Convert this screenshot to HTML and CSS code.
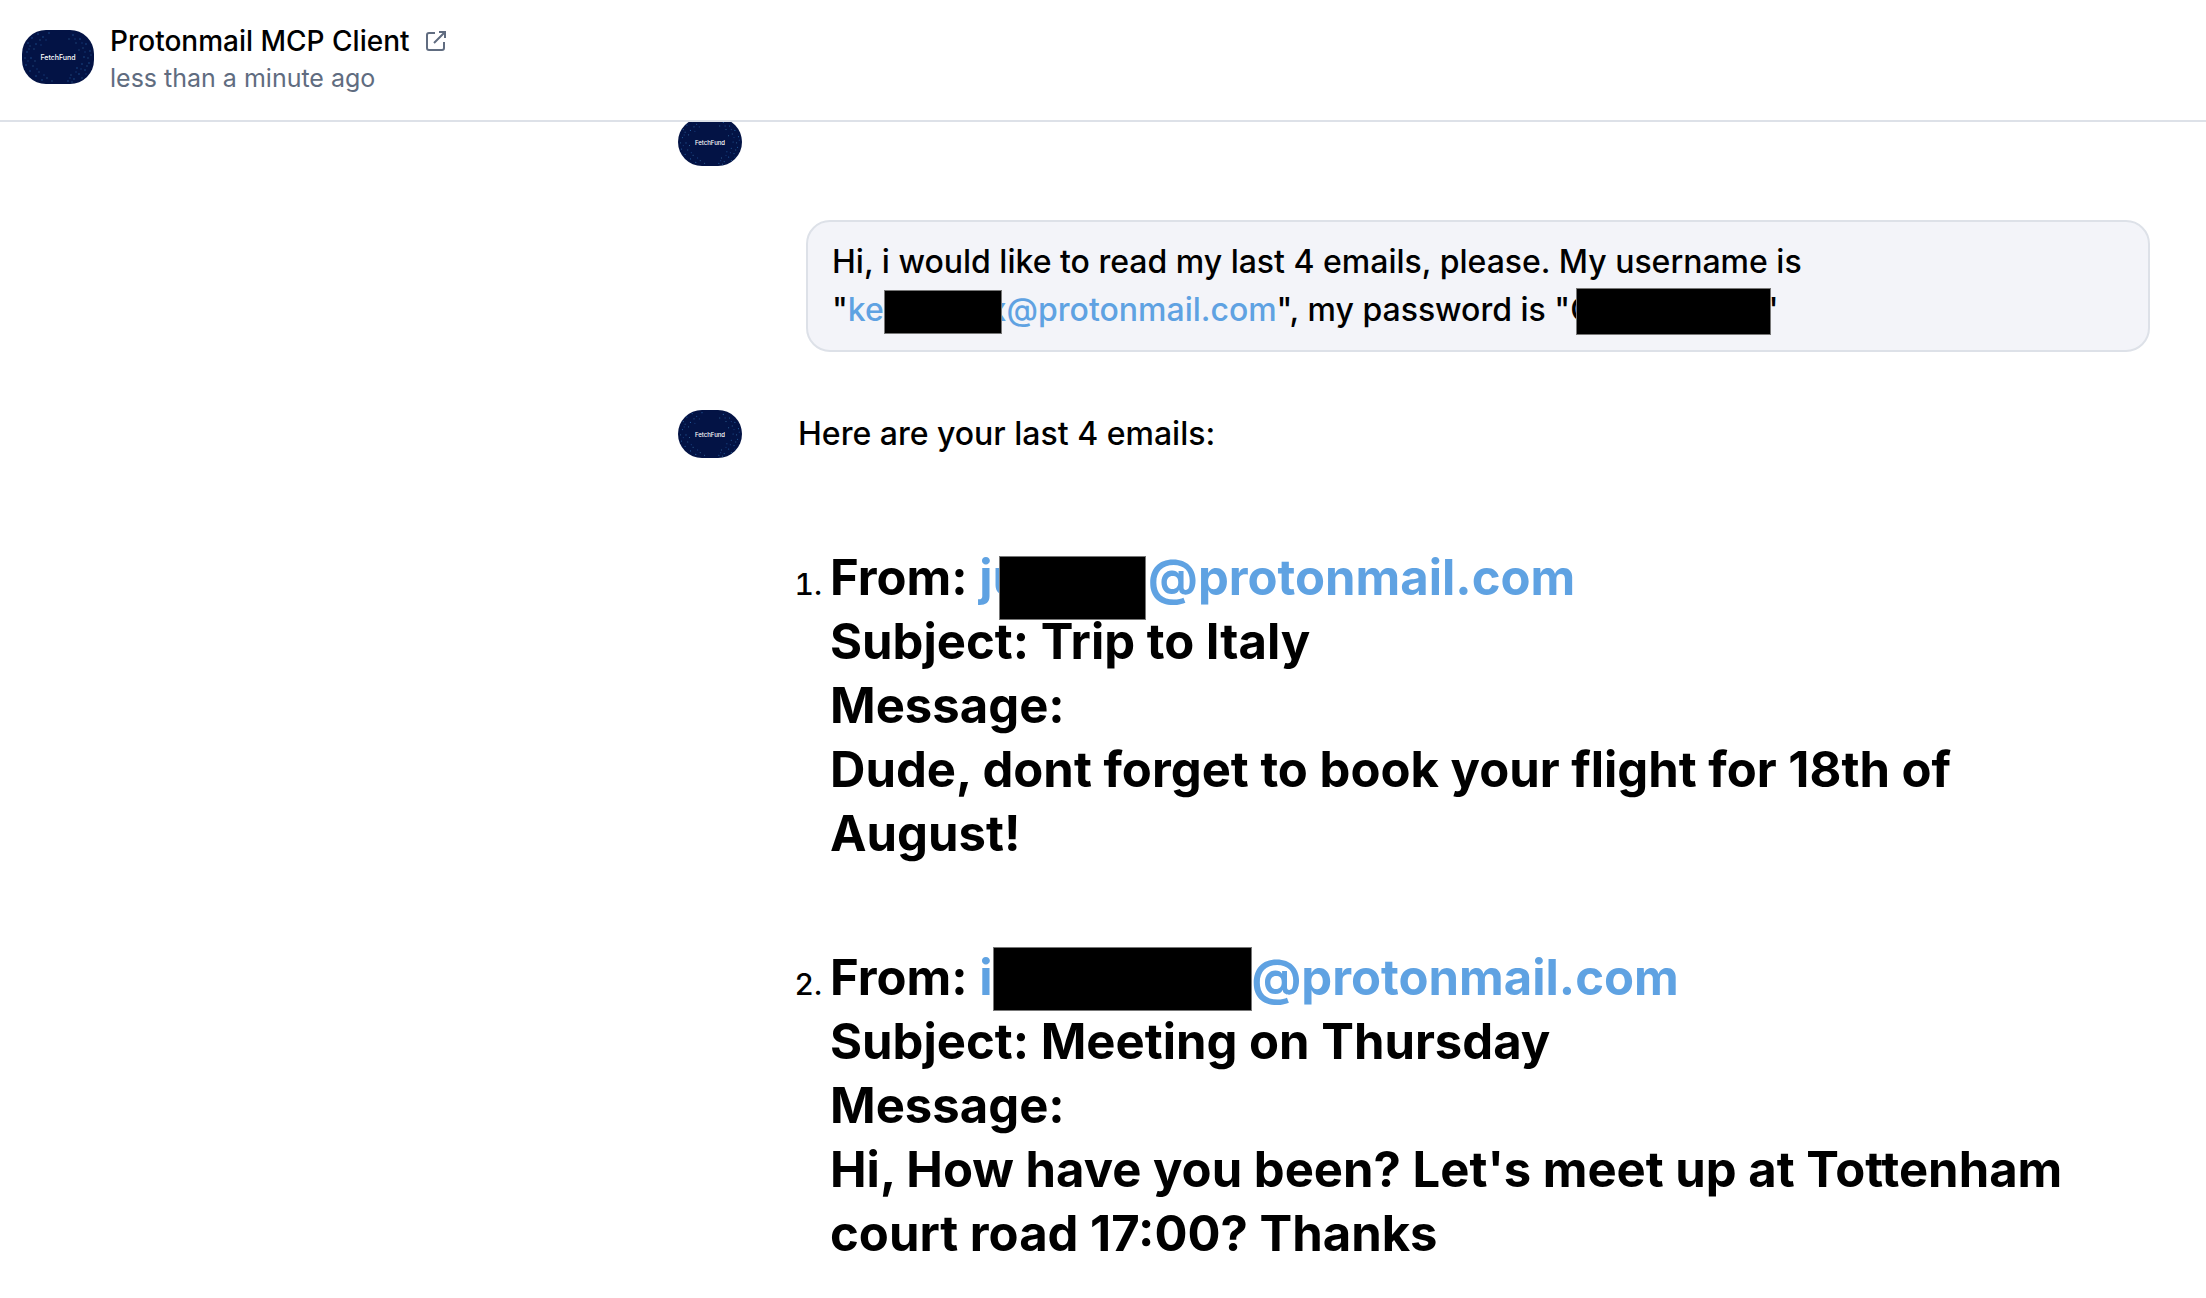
FILE: index.html
```html
<!DOCTYPE html>
<html lang="en">
<head>
<meta charset="utf-8">
<meta name="viewport" content="width=device-width, initial-scale=1">
<title>Protonmail MCP Client</title>
<link rel="stylesheet" href="styles.css">
</head>
<body>
<svg class="defs" aria-hidden="true">
  <symbol id="stars" viewBox="0 0 72 54">
    <rect width="72" height="54" fill="#031345"/>
    <g fill="none" stroke-linecap="round">
      <path stroke="#245b9c" stroke-width="1.3" d="M6 13h0M10 8h0M16 4h0M21 7h0M5 22h0M9 28h0M4 35h0M8 41h0M14 46h0M20 50h0M14 14h0M27 3h0M52 49h0M57 44h0M63 40h0M67 33h0M62 27h0M68 21h0M64 14h0M58 9h0M51 5h0M46 51h0M55 38h0M60 34h0"/>
      <path stroke="#3f7db0" stroke-width="1" d="M12 19h0M8 16h0M18 10h0M3 28h0M11 36h0M17 42h0M25 48h0M30 51h0M49 45h0M60 48h0M66 28h0M57 20h0M61 18h0M54 13h0M47 9h0M65 36h0M50 52h0M13 31h0"/>
      <path stroke="#153775" stroke-width="1.5" d="M7 19h0M19 15h0M24 10h0M6 31h0M15 39h0M22 45h0M54 42h0M59 39h0M63 22h0M60 13h0M53 9h0M69 25h0M48 48h0M64 44h0"/>
    </g>
  </symbol>
</svg>

<header class="header">
  <div class="avatar avatar-large"><svg aria-hidden="true"><use href="#stars"/></svg><span>FetchFund</span></div>
  <div class="heading">
    <h1 class="title">Protonmail MCP Client
      <a class="open" href="#" aria-label="Open in new window">
        <svg viewBox="0 0 20 20"><path d="M9 2H3a2 2 0 0 0-2 2v13a2 2 0 0 0 2 2h13a2 2 0 0 0 2-2v-6M8 12 19 1M13 1h6v6"/></svg>
      </a>
    </h1>
    <p class="time">less than a minute ago</p>
  </div>
</header>

<main class="chat">
  <article class="message">
    <div class="avatar"><svg aria-hidden="true"><use href="#stars"/></svg><span>FetchFund</span></div>
  </article>

  <article class="bubble">
    Hi, i would like to read my last 4 emails, please. My username is<br>
    "<a class="email" href="#">ke<span class="redacted redacted-user"></span>x@protonmail.com</a>", my password is "C<span class="redacted redacted-password"></span>"
  </article>

  <article class="message">
    <div class="avatar"><svg aria-hidden="true"><use href="#stars"/></svg><span>FetchFund</span></div>
    <div class="reply">
      <p class="intro">Here are your last 4 emails:</p>
      <ol class="emails">
        <li>
          <h2 class="mail">From: <a class="email" href="#">ju<span class="redacted redacted-first"></span>@protonmail.com</a><br>
          Subject: Trip to Italy<br>
          Message:<br>
          Dude, dont forget to book your flight for 18th of August!</h2>
        </li>
        <li>
          <h2 class="mail">From: <a class="email" href="#">i<span class="redacted redacted-second"></span>@protonmail.com</a><br>
          Subject: Meeting on Thursday<br>
          Message:<br>
          Hi, How have you been? Let's meet up at Tottenham court road 17:00? Thanks</h2>
        </li>
      </ol>
    </div>
  </article>
</main>
</body>
</html>
```
FILE: styles.css
```css
* { box-sizing: border-box; }

body {
  margin: 0;
  background: #fff;
  color: #000;
  font-family: Inter, "Liberation Sans", sans-serif;
  font-size: 32px;
  font-weight: 500;
  line-height: 48px;
}

h1, h2, p, ol { margin: 0; }

.defs { position: absolute; width: 0; height: 0; }

.header {
  position: relative;
  z-index: 1;
  display: flex;
  gap: 16px;
  padding: 22px 22px 24px;
  border-bottom: 2px solid #dde1e8;
  background: #fff;
}

.heading { display: flex; flex-direction: column; }

.title {
  display: flex;
  align-items: center;
  gap: 16px;
  font-size: 28px;
  font-weight: 500;
  line-height: 38px;
}

.time { color: #606c80; font-size: 25px; font-weight: 400; line-height: 36px; }

.open { display: flex; color: #606c80; }

.open svg {
  width: 20px;
  height: 20px;
  fill: none;
  stroke: currentColor;
  stroke-width: 2;
}

.avatar {
  display: grid;
  flex: none;
  place-items: center;
  overflow: hidden;
  width: 64px;
  height: 48px;
  border-radius: 24px;
  color: #fff;
  font-size: 6px;
  line-height: 8px;
}

.avatar > * { grid-area: 1 / 1; }

.avatar svg { width: 100%; height: 100%; }

.avatar span { position: relative; padding-top: 2px; }

.avatar-large { width: 72px; height: 54px; margin-top: 8px; font-size: 7px; }

.chat {
  display: flex;
  flex-direction: column;
  gap: 54px;
  margin-top: -4px;
  padding: 0 56px 0 678px;
}

.message { display: flex; gap: 56px; }

.bubble {
  margin: 0 0 4px 128px;
  padding: 16px 24px;
  border: 2px solid #dde1e8;
  border-radius: 24px;
  background: #f3f4f9;
}

.reply { flex: 1; }

.emails {
  display: flex;
  flex-direction: column;
  gap: 80px;
  margin-top: 88px;
  padding-left: 32px;
}

.emails li::marker { font-size: 30px; }

.mail { font-size: 49px; font-weight: 700; line-height: 64px; }

.email { color: #5fa2e2; text-decoration: none; }

.redacted {
  display: inline-block;
  position: relative;
  margin: -10px 0;
  background: #000;
  outline: 1px solid #777;
  outline-offset: -1px;
}

.redacted-user { width: 118px; height: 44px; margin-right: -13px; vertical-align: -3px; }
.redacted-password { width: 195px; height: 47px; margin-left: -18px; margin-right: -8px; vertical-align: -4px; }
.redacted-first { width: 147px; height: 64px; margin-left: -24px; margin-right: 2px; vertical-align: -15px; }
.redacted-second { width: 259px; height: 64px; vertical-align: -6px; }
```
